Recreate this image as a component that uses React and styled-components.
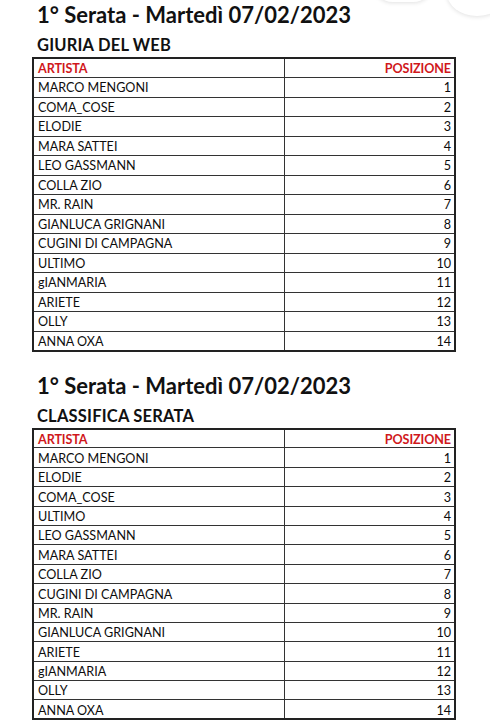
import React from "react";
import styled, { createGlobalStyle } from "styled-components";

const Global = createGlobalStyle`
  html, body { margin: 0; padding: 0; background: #fff; }
  body { font-family: Lato, "Liberation Sans", sans-serif; color: #111; }
`;

const Page = styled.div`
  position: relative;
  width: 490px;
  height: 722px;
  overflow: hidden;
  background: #fff;
  padding: 0 34px 0 32px;
  box-sizing: border-box;
`;

const Section = styled.section`
  display: flex;
  flex-direction: column;
  padding-top: ${(p) => p.$top}px;
`;

const Title = styled.h1`
  margin: 0;
  padding-left: 5px;
  font-size: 22px;
  line-height: 30px;
  font-weight: 700;
  color: #111;
  white-space: nowrap;
`;

const Subtitle = styled.h2`
  margin: 5px 0 0;
  padding-left: 5px;
  font-size: 16.5px;
  line-height: 20px;
  font-weight: 700;
  color: #111;
  letter-spacing: 0.2px;
`;

const Table = styled.table`
  margin-top: ${(p) => p.$gap}px;
  width: 424px;
  border-collapse: collapse;
  border: 2px solid #222;
  table-layout: fixed;
`;

const Row = styled.tr`
  height: ${(p) => p.$h}px;
`;

const Cell = styled.td`
  border: 1px solid #333;
  padding: 3px 3px 0 4px;
  font-size: 12.6px;
  line-height: 1;
  color: #0d0d0d;
  text-align: ${(p) => (p.$right ? "right" : "left")};
  white-space: nowrap;
`;

const HeadCell = styled(Cell).attrs({ as: "th" })`
  color: #d0181c;
  font-weight: 700;
  letter-spacing: -0.1px;
`;

const Bubble = styled.div`
  position: absolute;
  background: #fff;
  box-shadow: 0 1px 4px rgba(0, 0, 0, 0.12);
  border-radius: 50%;
`;

const web = [
  "MARCO MENGONI",
  "COMA_COSE",
  "ELODIE",
  "MARA SATTEI",
  "LEO GASSMANN",
  "COLLA ZIO",
  "MR. RAIN",
  "GIANLUCA GRIGNANI",
  "CUGINI DI CAMPAGNA",
  "ULTIMO",
  "gIANMARIA",
  "ARIETE",
  "OLLY",
  "ANNA OXA",
];

const serata = [
  "MARCO MENGONI",
  "ELODIE",
  "COMA_COSE",
  "ULTIMO",
  "LEO GASSMANN",
  "MARA SATTEI",
  "COLLA ZIO",
  "CUGINI DI CAMPAGNA",
  "MR. RAIN",
  "GIANLUCA GRIGNANI",
  "ARIETE",
  "gIANMARIA",
  "OLLY",
  "ANNA OXA",
];

function Ranking({ top, gap, subtitle, names, rowH }) {
  return (
    <Section $top={top}>
      <Title>1° Serata - Martedì 07/02/2023</Title>
      <Subtitle>{subtitle}</Subtitle>
      <Table $gap={gap}>
        <colgroup>
          <col style={{ width: "251px" }} />
          <col />
        </colgroup>
        <thead>
          <Row $h={rowH}>
            <HeadCell>ARTISTA</HeadCell>
            <HeadCell $right>POSIZIONE</HeadCell>
          </Row>
        </thead>
        <tbody>
          {names.map((n, i) => (
            <Row key={n} $h={rowH}>
              <Cell>{n}</Cell>
              <Cell $right>{i + 1}</Cell>
            </Row>
          ))}
        </tbody>
      </Table>
    </Section>
  );
}

export default function App() {
  return (
    <>
      <Global />
      <Page>
        <Bubble style={{ left: 372, top: -40, width: 62, height: 42, borderRadius: 21 }} />
        <Bubble style={{ left: 447, top: -30, width: 60, height: 46 }} />
        <Ranking top={0} gap={2} subtitle="GIURIA DEL WEB" names={web} rowH={19.5} />
        <Ranking top={19} gap={2} subtitle="CLASSIFICA SERATA" names={serata} rowH={19.4} />
      </Page>
    </>
  );
}
